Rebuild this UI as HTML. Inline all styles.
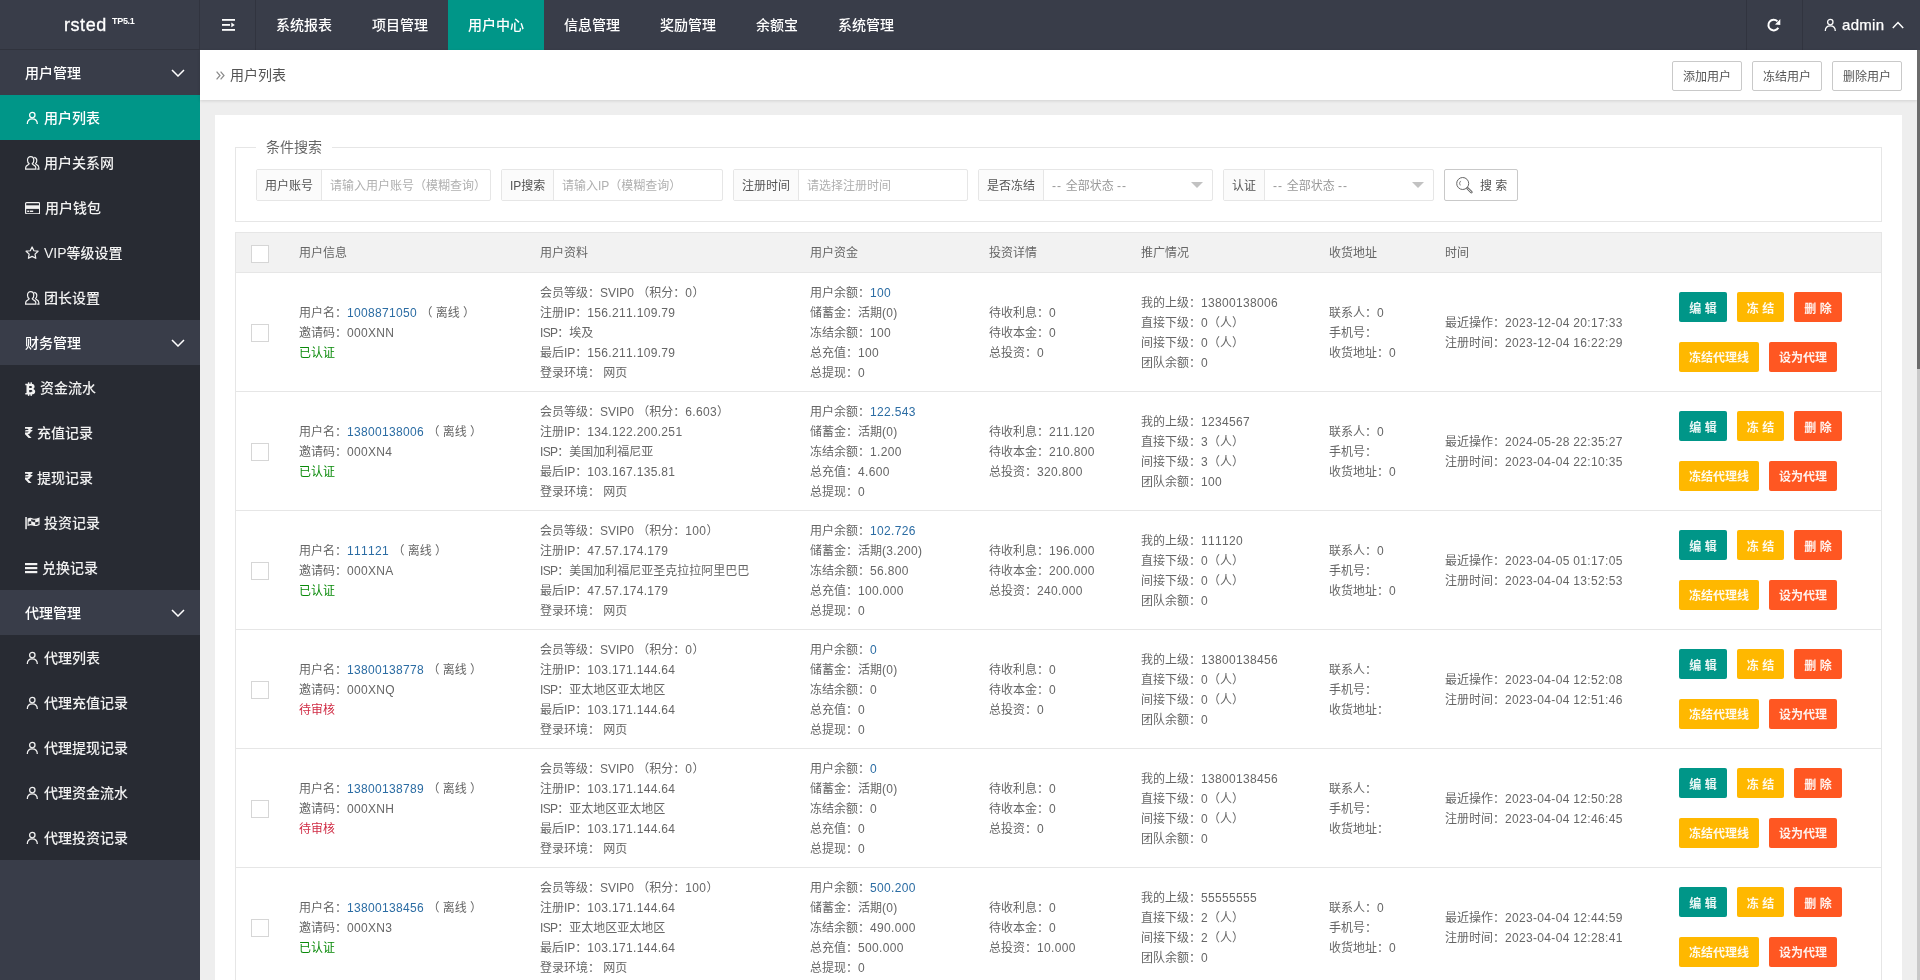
<!DOCTYPE html>
<html lang="zh-CN"><head><meta charset="utf-8"><title>用户列表</title>
<style>
*{box-sizing:border-box;margin:0;padding:0}
html,body{width:1920px;height:980px;overflow:hidden;background:#eee;font-family:"Liberation Sans","Noto Sans CJK SC",sans-serif;font-size:14px;color:#666}
i{font-style:normal;letter-spacing:.33px;font-kerning:none}
u{text-decoration:none;letter-spacing:-.7px}
i.d{letter-spacing:.9px;margin:0 .6px 0 0}
#root{position:absolute;left:0;top:0;width:1920px;height:980px;will-change:transform;transform:translateZ(0)}
#hd{position:absolute;left:0;top:0;width:1920px;height:50px;background:#393D49;color:#fff}
#logo{position:absolute;left:0;top:0;width:200px;height:50px;line-height:50px;}
#logo .a{position:absolute;left:64px;top:0;font-size:18px;letter-spacing:.55px;-webkit-text-stroke:.3px #fff}
#logo .b{position:absolute;left:112px;top:15px;font-size:9px;line-height:12px;font-weight:bold;letter-spacing:-.3px}
.vl{position:absolute;top:0;width:1px;height:50px;background:#31343f}
.nv{position:absolute;top:0;height:50px;line-height:50px;text-align:center;font-size:14px;color:#fff;font-weight:500}
.nv.act{background:#009688}
#side{position:absolute;left:0;top:50px;width:200px;height:930px;background:#393D49}
.sg{position:absolute;left:0;width:200px;height:45px;line-height:45px;color:#fff;font-weight:500;background:#393D49;margin-top:-50px}
.sg span{position:absolute;left:25px;top:1px}
.sg .chev{position:absolute;left:171px;top:19px}
.si{position:absolute;left:0;width:200px;height:45px;line-height:45px;color:#f2f2f2;font-weight:500;background:#282B33;margin-top:-50px}
.si.act{background:#009688;color:#fff}
.si span{position:absolute;top:1px;white-space:nowrap}
.ic{position:absolute}
#bc{position:absolute;left:200px;top:50px;width:1717px;height:50px;background:#fff;box-shadow:0 1px 3px rgba(0,0,0,.12)}
#bc .t{position:absolute;left:30px;top:0;line-height:50px;font-size:14px;color:#555}
.ob{position:absolute;top:11px;height:30px;width:70px;border:1px solid #c9c9c9;border-radius:2px;font-size:12px;line-height:30px;text-align:center;color:#555;background:#fff}
#card{position:absolute;left:215px;top:115px;width:1687px;height:900px;background:#fff}
#fs{position:absolute;left:20px;top:32px;width:1647px;height:75px;border:1px solid #e6e6e6}
#lg{position:absolute;left:41px;top:21px;padding:0 10px;background:#fff;font-size:14px;line-height:22px;color:#666}
.ig{position:absolute;top:54px;height:32px;border:1px solid #e6e6e6;border-radius:2px;font-size:12px;line-height:32px;display:flex}
.ig .l{background:#fbfbfb;border-right:1px solid #e6e6e6;color:#555;text-align:center;padding:0 8px;white-space:nowrap}
.ig .p{color:#b0b0b0;padding-left:8px;white-space:nowrap;flex:1;position:relative}
.ig .p.s{color:#999}
.ig .p.s::after{content:"";position:absolute;right:9px;top:12px;border:6px solid transparent;border-top-color:#c2c2c2}
#sb{position:absolute;left:1229px;top:54px;width:74px;height:32px;border:1px solid #c9c9c9;border-radius:2px;font-size:12px;line-height:32px;color:#555}
#tb{position:absolute;left:20px;top:117px;width:1647px;height:800px;border:1px solid #e6e6e6;border-bottom:0}
#th{position:absolute;left:0;top:0;width:1645px;height:40px;background:#f2f2f2;border-bottom:1px solid #e6e6e6;font-size:12px;line-height:41px;color:#666}
#th span{position:absolute;top:0}
.cb{position:absolute;left:15px;width:18px;height:18px;border:1px solid #d6d6d6;background:#fff}
.tr{position:absolute;left:0;width:1645px;height:119px;border-bottom:1px solid #e6e6e6;font-size:12px;line-height:20px;color:#666;margin-top:-1px}
.tr .cb{top:51px}
.c{position:absolute;top:1px;height:118px;display:flex;flex-direction:column;justify-content:center;white-space:nowrap}
.c a{color:#2b6ca3}
.c b{font-weight:normal}
.ok{color:#0a8a0a} .no{color:#d02c45}
.c1{left:63px}.c2{left:304px}.c3{left:574px}.c4{left:753px}.c5{left:905px}.c6{left:1093px}.c7{left:1209px}
.bt{position:absolute;height:30px;line-height:32px;border-radius:2px;color:rgba(255,255,255,.92);font-size:12px;font-weight:bold;text-align:center;white-space:nowrap}
.g{background:#009688}.y{background:#FFB800}.r{background:#FF5722}
#sbar{position:absolute;left:1917px;top:50px;width:3px;height:930px;background:#c9c9c9}
#sbar div{width:3px;height:319px;background:#6b6b6b}
</style></head><body><div id="root">
<div id="hd">
<div style="position:absolute;left:0;top:49px;width:200px;height:1px;background:#30333d"></div><div id="logo"><span class="a">rsted</span><span class="b">TP5.1</span></div>
<div class="vl" style="left:199px"></div><div class="vl" style="left:255px"></div><div class="vl" style="left:1746px"></div><div class="vl" style="left:1802px"></div>
<svg style="position:absolute;left:222px;top:19px" width="13" height="12" viewBox="0 0 13 12"><rect x="0" y="0" width="13" height="1.8" fill="#fff"/><rect x="0" y="5" width="8" height="1.8" fill="#fff"/><rect x="0" y="10" width="13" height="1.8" fill="#fff"/><path d="M9.3 3.6 L12.8 5.9 L9.3 8.2 Z" fill="#fff"/></svg>
<div class="nv" style="left:256px;width:96px">系统报表</div>
<div class="nv" style="left:352px;width:96px">项目管理</div>
<div class="nv act" style="left:448px;width:96px">用户中心</div>
<div class="nv" style="left:544px;width:96px">信息管理</div>
<div class="nv" style="left:640px;width:96px">奖励管理</div>
<div class="nv" style="left:736px;width:82px">余额宝</div>
<div class="nv" style="left:818px;width:96px">系统管理</div>
<svg style="position:absolute;left:1766px;top:18px" width="16" height="15" viewBox="0 0 16 15"><path d="M11.45 3.35 A5.3 5.3 0 1 0 12.29 9.75" fill="none" stroke="#fff" stroke-width="2"/><path d="M14.3 1.1 L14.3 7 L9 6.6 Z" fill="#fff"/></svg>
<svg class="ic" color="#fff" style="left:1824px;top:18px" width="13" height="14" viewBox="0 0 13 14"><circle cx="6.3" cy="4.1" r="2.7" fill="none" stroke="currentColor" stroke-width="1.25"/><path d="M1.3 13.1 C1.3 9.6 3.5 7.9 6.3 7.9 C9.1 7.9 11.3 9.6 11.3 13.1" fill="none" stroke="currentColor" stroke-width="1.25"/></svg>
<div class="nv" style="left:1842px;width:44px;font-size:15px;text-align:left;letter-spacing:.3px;-webkit-text-stroke:.25px #fff">admin</div>
<svg style="position:absolute;left:1892px;top:21px" width="12" height="8" viewBox="0 0 12 8"><path d="M0.8 7 L6 1.6 L11.2 7" fill="none" stroke="#fff" stroke-width="1.5"/></svg>
</div>
<div id="side">
<div class="sg" style="top:50px"><span>用户管理</span><svg class="chev" width="14" height="8" viewBox="0 0 14 8"><path d="M1 1 L7 7 L13 1" fill="none" stroke="#fff" stroke-width="1.5"/></svg></div>
<div class="si act" style="top:95px"><svg class="ic" style="left:26px;top:16px" width="13" height="14" viewBox="0 0 13 14"><circle cx="6.3" cy="4.1" r="2.7" fill="none" stroke="currentColor" stroke-width="1.25"/><path d="M1.3 13.1 C1.3 9.6 3.5 7.9 6.3 7.9 C9.1 7.9 11.3 9.6 11.3 13.1" fill="none" stroke="currentColor" stroke-width="1.25"/></svg><span style="left:44px">用户列表</span></div>
<div class="si" style="top:140px"><svg class="ic" style="left:25px;top:16px" width="15" height="14" viewBox="0 0 15 14"><path d="M5.6 0.7 C7.6 0.7 8.8 2.2 8.8 4.2 C8.8 5.8 8.1 7 7.2 7.7 C7.2 8.6 9.6 9.2 10.4 10.4 C10.9 11.2 10.9 12.4 10.9 13.2 L0.6 13.2 C0.6 12.2 0.6 11.2 1.1 10.4 C1.9 9.2 4.2 8.6 4.2 7.7 C3.2 7 2.5 5.8 2.5 4.2 C2.5 2.2 3.7 0.7 5.6 0.7 Z" fill="none" stroke="currentColor" stroke-width="1.2"/><path d="M9.2 1.4 C10.9 1.6 11.8 3 11.8 4.6 C11.8 6 11.2 7 10.5 7.6 C10.5 8.5 12.6 9 13.4 10.2 C13.9 11 13.9 12 13.9 13.2 L12.2 13.2" fill="none" stroke="currentColor" stroke-width="1.2"/></svg><span style="left:44px">用户关系网</span></div>
<div class="si" style="top:185px"><svg class="ic" style="left:24.9px;top:16.8px" width="15.2" height="12.4" viewBox="0 0 15.2 12.4"><rect x="0.6" y="0.6" width="14" height="11.2" rx="1" fill="none" stroke="currentColor" stroke-width="1.2"/><rect x="0.6" y="3.3" width="14" height="3.6" fill="currentColor"/><rect x="2.2" y="8.6" width="2" height="1.4" fill="currentColor"/><rect x="4.9" y="8.6" width="3.3" height="1.4" fill="currentColor"/></svg><span style="left:45px">用户钱包</span></div>
<div class="si" style="top:230px"><svg class="ic" style="left:24.6px;top:15.6px" width="14.2" height="13.3" viewBox="0 0 15 14"><path d="M7.5 1 L9.4 5 L13.8 5.5 L10.6 8.6 L11.4 13 L7.5 10.9 L3.6 13 L4.4 8.6 L1.2 5.5 L5.6 5 Z" fill="none" stroke="currentColor" stroke-width="1.3" stroke-linejoin="round"/></svg><span style="left:44px">VIP等级设置</span></div>
<div class="si" style="top:275px"><svg class="ic" style="left:25px;top:16px" width="15" height="14" viewBox="0 0 15 14"><path d="M5.6 0.7 C7.6 0.7 8.8 2.2 8.8 4.2 C8.8 5.8 8.1 7 7.2 7.7 C7.2 8.6 9.6 9.2 10.4 10.4 C10.9 11.2 10.9 12.4 10.9 13.2 L0.6 13.2 C0.6 12.2 0.6 11.2 1.1 10.4 C1.9 9.2 4.2 8.6 4.2 7.7 C3.2 7 2.5 5.8 2.5 4.2 C2.5 2.2 3.7 0.7 5.6 0.7 Z" fill="none" stroke="currentColor" stroke-width="1.2"/><path d="M9.2 1.4 C10.9 1.6 11.8 3 11.8 4.6 C11.8 6 11.2 7 10.5 7.6 C10.5 8.5 12.6 9 13.4 10.2 C13.9 11 13.9 12 13.9 13.2 L12.2 13.2" fill="none" stroke="currentColor" stroke-width="1.2"/></svg><span style="left:44px">团长设置</span></div>
<div class="sg" style="top:320px"><span>财务管理</span><svg class="chev" width="14" height="8" viewBox="0 0 14 8"><path d="M1 1 L7 7 L13 1" fill="none" stroke="#fff" stroke-width="1.5"/></svg></div>
<div class="si" style="top:365px"><svg class="ic" style="left:25px;top:16.6px" width="11" height="14" viewBox="0 0 11 14"><path d="M0.3 1.8 H6.2 C8.6 1.8 9.6 3 9.6 4.6 C9.6 5.7 9.1 6.5 8.2 6.9 C9.5 7.3 10.2 8.2 10.2 9.5 C10.2 11.4 8.9 12.4 6.5 12.4 H0.3 V10.9 H1.5 V3.3 H0.3 Z M4.2 3.9 V6 H5.6 C6.5 6 6.9 5.6 6.9 4.95 C6.9 4.3 6.5 3.9 5.6 3.9 Z M4.2 7.9 V10.3 H5.8 C6.9 10.3 7.4 9.9 7.4 9.1 C7.4 8.3 6.9 7.9 5.8 7.9 Z" fill="currentColor" fill-rule="evenodd"/><rect x="2.9" y="0.3" width="1.4" height="2" fill="currentColor"/><rect x="5.5" y="0.3" width="1.4" height="2" fill="currentColor"/><rect x="2.9" y="12" width="1.4" height="1.9" fill="currentColor"/><rect x="5.5" y="12" width="1.4" height="1.9" fill="currentColor"/></svg><span style="left:40px">资金流水</span></div>
<div class="si" style="top:410px"><svg class="ic" style="left:25px;top:17px" width="8" height="11" viewBox="0 0 8 11"><path d="M0 0 H7.6 L7 1.8 H5.3 C5.6 2.1 5.8 2.5 5.9 2.9 H7.6 L7 4.6 H5.9 C5.6 6.3 4.4 7.1 2.9 7.3 L6.6 10.9 H3.7 L0 7.2 V5.6 H1.6 C2.7 5.6 3.4 5.3 3.7 4.6 H0 L0.6 2.9 H3.6 C3.3 2.2 2.6 1.8 1.5 1.8 H0 Z" fill="currentColor"/></svg><span style="left:37px">充值记录</span></div>
<div class="si" style="top:455px"><svg class="ic" style="left:25px;top:17px" width="8" height="11" viewBox="0 0 8 11"><path d="M0 0 H7.6 L7 1.8 H5.3 C5.6 2.1 5.8 2.5 5.9 2.9 H7.6 L7 4.6 H5.9 C5.6 6.3 4.4 7.1 2.9 7.3 L6.6 10.9 H3.7 L0 7.2 V5.6 H1.6 C2.7 5.6 3.4 5.3 3.7 4.6 H0 L0.6 2.9 H3.6 C3.3 2.2 2.6 1.8 1.5 1.8 H0 Z" fill="currentColor"/></svg><span style="left:37px">提现记录</span></div>
<div class="si" style="top:500px"><svg class="ic" style="left:25px;top:16.8px" width="15" height="13" viewBox="0 0 15 13"><rect x="0.3" y="0" width="1.5" height="12.2" fill="currentColor"/><path d="M3.1 1.9 C4.8 1.1 6.2 1.3 7.6 1.9 C9.4 2.7 11.4 2.4 14 1.2 V7.4 C11.6 8.6 9.6 8.9 7.8 8.1 C6.4 7.5 4.8 7.4 3.1 8.2 Z" fill="none" stroke="currentColor" stroke-width="1.1"/><path d="M3.1 1.9 C4.2 1.4 5.2 1.3 6.2 1.5 V4.3 C5.2 4.1 4.2 4.3 3.1 4.8 Z M6.2 4.3 C7.4 4.6 8.6 5.4 10.2 5.3 V8.3 C8.6 8.4 7.4 7.7 6.2 7.4 Z M10.2 2.6 C11.6 2.5 12.8 2 14 1.2 V4.2 C12.8 4.9 11.6 5.3 10.2 5.3 Z" fill="currentColor"/></svg><span style="left:44px">投资记录</span></div>
<div class="si" style="top:545px"><svg class="ic" style="left:25px;top:18px" width="13" height="11" viewBox="0 0 13 11"><rect x="0" y="0" width="12.3" height="2.2" fill="currentColor"/><rect x="0" y="4" width="12.3" height="2.2" fill="currentColor"/><rect x="0" y="8" width="12.3" height="2.2" fill="currentColor"/></svg><span style="left:42px">兑换记录</span></div>
<div class="sg" style="top:590px"><span>代理管理</span><svg class="chev" width="14" height="8" viewBox="0 0 14 8"><path d="M1 1 L7 7 L13 1" fill="none" stroke="#fff" stroke-width="1.5"/></svg></div>
<div class="si" style="top:635px"><svg class="ic" style="left:26px;top:16px" width="13" height="14" viewBox="0 0 13 14"><circle cx="6.3" cy="4.1" r="2.7" fill="none" stroke="currentColor" stroke-width="1.25"/><path d="M1.3 13.1 C1.3 9.6 3.5 7.9 6.3 7.9 C9.1 7.9 11.3 9.6 11.3 13.1" fill="none" stroke="currentColor" stroke-width="1.25"/></svg><span style="left:44px">代理列表</span></div>
<div class="si" style="top:680px"><svg class="ic" style="left:26px;top:16px" width="13" height="14" viewBox="0 0 13 14"><circle cx="6.3" cy="4.1" r="2.7" fill="none" stroke="currentColor" stroke-width="1.25"/><path d="M1.3 13.1 C1.3 9.6 3.5 7.9 6.3 7.9 C9.1 7.9 11.3 9.6 11.3 13.1" fill="none" stroke="currentColor" stroke-width="1.25"/></svg><span style="left:44px">代理充值记录</span></div>
<div class="si" style="top:725px"><svg class="ic" style="left:26px;top:16px" width="13" height="14" viewBox="0 0 13 14"><circle cx="6.3" cy="4.1" r="2.7" fill="none" stroke="currentColor" stroke-width="1.25"/><path d="M1.3 13.1 C1.3 9.6 3.5 7.9 6.3 7.9 C9.1 7.9 11.3 9.6 11.3 13.1" fill="none" stroke="currentColor" stroke-width="1.25"/></svg><span style="left:44px">代理提现记录</span></div>
<div class="si" style="top:770px"><svg class="ic" style="left:26px;top:16px" width="13" height="14" viewBox="0 0 13 14"><circle cx="6.3" cy="4.1" r="2.7" fill="none" stroke="currentColor" stroke-width="1.25"/><path d="M1.3 13.1 C1.3 9.6 3.5 7.9 6.3 7.9 C9.1 7.9 11.3 9.6 11.3 13.1" fill="none" stroke="currentColor" stroke-width="1.25"/></svg><span style="left:44px">代理资金流水</span></div>
<div class="si" style="top:815px"><svg class="ic" style="left:26px;top:16px" width="13" height="14" viewBox="0 0 13 14"><circle cx="6.3" cy="4.1" r="2.7" fill="none" stroke="currentColor" stroke-width="1.25"/><path d="M1.3 13.1 C1.3 9.6 3.5 7.9 6.3 7.9 C9.1 7.9 11.3 9.6 11.3 13.1" fill="none" stroke="currentColor" stroke-width="1.25"/></svg><span style="left:44px">代理投资记录</span></div>
</div>
<div id="bc"><svg style="position:absolute;left:16px;top:21px" width="9" height="9" viewBox="0 0 9 9"><path d="M0.6 0.6 L4 4.5 L0.6 8.4 M4.6 0.6 L8 4.5 L4.6 8.4" fill="none" stroke="#8a8a8a" stroke-width="1.2"/></svg><span class="t">用户列表</span>
<span class="ob" style="left:1472px">添加用户</span><span class="ob" style="left:1552px">冻结用户</span><span class="ob" style="left:1632px">删除用户</span></div>
<div id="card">
<div id="fs"></div><div id="lg">条件搜索</div>
<div class="ig" style="left:41px;width:235px"><span class="l" style="width:65px">用户账号</span><span class="p">请输入用户账号（模糊查询）</span></div>
<div class="ig" style="left:286px;width:222px"><span class="l" style="width:52px">IP搜索</span><span class="p">请输入IP（模糊查询）</span></div>
<div class="ig" style="left:518px;width:235px"><span class="l" style="width:65px">注册时间</span><span class="p">请选择注册时间</span></div>
<div class="ig" style="left:763px;width:235px"><span class="l" style="width:65px">是否冻结</span><span class="p s"><i class="d">--</i> 全部状态 <i class="d">--</i></span></div>
<div class="ig" style="left:1008px;width:211px"><span class="l" style="width:41px">认证</span><span class="p s"><i class="d">--</i> 全部状态 <i class="d">--</i></span></div>
<div id="sb"><svg style="position:absolute;left:11px;top:7px" width="18" height="18" viewBox="0 0 18 18"><circle cx="6.7" cy="6.5" r="6" fill="none" stroke="#666" stroke-width="1"/><path d="M11.6 11.4 L15.4 15.2" stroke="#666" stroke-width="2.6" stroke-linecap="round"/><path d="M11.9 11.7 L15.3 15.1" stroke="#fff" stroke-width="0.9" stroke-linecap="round"/><path d="M4.7 3.9 A3.4 3.4 0 0 0 4.3 8.4" fill="none" stroke="#666" stroke-width="0.8"/></svg><span style="position:absolute;left:35px">搜 索</span></div>
<div id="tb">
<div id="th"><span class="cb" style="top:12px"></span><span style="left:63px">用户信息</span><span style="left:304px">用户资料</span><span style="left:574px">用户资金</span><span style="left:753px">投资详情</span><span style="left:905px">推广情况</span><span style="left:1093px">收货地址</span><span style="left:1209px">时间</span></div>
<div class="tr" style="top:41px">
<span class="cb"></span>
<div class="c c1"><p>用户名：<a><i>1008871050</i></a> （ 离线 ）</p><p>邀请码：<i>000XNN</i></p><p><b class="ok">已认证</b></p></div>
<div class="c c2"><p>会员等级：SVIP0 （积分：<i>0</i>）</p><p>注册IP：<i>156.211.109.79</i></p><p><u>ISP</u>：埃及</p><p>最后IP：<i>156.211.109.79</i></p><p>登录环境： 网页</p></div>
<div class="c c3"><p>用户余额：<a><i>100</i></a></p><p>储蓄金：活期<i>(0)</i></p><p>冻结余额：<i>100</i></p><p>总充值：<i>100</i></p><p>总提现：<i>0</i></p></div>
<div class="c c4"><p>待收利息：<i>0</i></p><p>待收本金：<i>0</i></p><p>总投资：<i>0</i></p></div>
<div class="c c5"><p>我的上级：<i>13800138006</i></p><p>直接下级：<i>0</i>（人）</p><p>间接下级：<i>0</i>（人）</p><p>团队余额：<i>0</i></p></div>
<div class="c c6"><p>联系人：<i>0</i></p><p>手机号：</p><p>收货地址：<i>0</i></p></div>
<div class="c c7"><p>最近操作：<i>2023-12-04 20:17:33</i></p><p>注册时间：<i>2023-12-04 16:22:29</i></p></div>
<span class="bt g" style="left:1443px;top:19px;width:48px;line-height:34px">编 辑</span><span class="bt y" style="left:1501px;top:19px;width:47px;line-height:34px">冻 结</span><span class="bt r" style="left:1558px;top:19px;width:48px;line-height:34px">删 除</span>
<span class="bt y" style="left:1443px;top:69px;width:80px">冻结代理线</span><span class="bt r" style="left:1533px;top:69px;width:68px">设为代理</span>
</div>
<div class="tr" style="top:160px">
<span class="cb"></span>
<div class="c c1"><p>用户名：<a><i>13800138006</i></a> （ 离线 ）</p><p>邀请码：<i>000XN4</i></p><p><b class="ok">已认证</b></p></div>
<div class="c c2"><p>会员等级：SVIP0 （积分：<i>6.603</i>）</p><p>注册IP：<i>134.122.200.251</i></p><p><u>ISP</u>：美国加利福尼亚</p><p>最后IP：<i>103.167.135.81</i></p><p>登录环境： 网页</p></div>
<div class="c c3"><p>用户余额：<a><i>122.543</i></a></p><p>储蓄金：活期<i>(0)</i></p><p>冻结余额：<i>1.200</i></p><p>总充值：<i>4.600</i></p><p>总提现：<i>0</i></p></div>
<div class="c c4"><p>待收利息：<i>211.120</i></p><p>待收本金：<i>210.800</i></p><p>总投资：<i>320.800</i></p></div>
<div class="c c5"><p>我的上级：<i>1234567</i></p><p>直接下级：<i>3</i>（人）</p><p>间接下级：<i>3</i>（人）</p><p>团队余额：<i>100</i></p></div>
<div class="c c6"><p>联系人：<i>0</i></p><p>手机号：</p><p>收货地址：<i>0</i></p></div>
<div class="c c7"><p>最近操作：<i>2024-05-28 22:35:27</i></p><p>注册时间：<i>2023-04-04 22:10:35</i></p></div>
<span class="bt g" style="left:1443px;top:19px;width:48px;line-height:34px">编 辑</span><span class="bt y" style="left:1501px;top:19px;width:47px;line-height:34px">冻 结</span><span class="bt r" style="left:1558px;top:19px;width:48px;line-height:34px">删 除</span>
<span class="bt y" style="left:1443px;top:69px;width:80px">冻结代理线</span><span class="bt r" style="left:1533px;top:69px;width:68px">设为代理</span>
</div>
<div class="tr" style="top:279px">
<span class="cb"></span>
<div class="c c1"><p>用户名：<a><i>111121</i></a> （ 离线 ）</p><p>邀请码：<i>000XNA</i></p><p><b class="ok">已认证</b></p></div>
<div class="c c2"><p>会员等级：SVIP0 （积分：<i>100</i>）</p><p>注册IP：<i>47.57.174.179</i></p><p><u>ISP</u>：美国加利福尼亚圣克拉拉阿里巴巴</p><p>最后IP：<i>47.57.174.179</i></p><p>登录环境： 网页</p></div>
<div class="c c3"><p>用户余额：<a><i>102.726</i></a></p><p>储蓄金：活期<i>(3.200)</i></p><p>冻结余额：<i>56.800</i></p><p>总充值：<i>100.000</i></p><p>总提现：<i>0</i></p></div>
<div class="c c4"><p>待收利息：<i>196.000</i></p><p>待收本金：<i>200.000</i></p><p>总投资：<i>240.000</i></p></div>
<div class="c c5"><p>我的上级：<i>111120</i></p><p>直接下级：<i>0</i>（人）</p><p>间接下级：<i>0</i>（人）</p><p>团队余额：<i>0</i></p></div>
<div class="c c6"><p>联系人：<i>0</i></p><p>手机号：</p><p>收货地址：<i>0</i></p></div>
<div class="c c7"><p>最近操作：<i>2023-04-05 01:17:05</i></p><p>注册时间：<i>2023-04-04 13:52:53</i></p></div>
<span class="bt g" style="left:1443px;top:19px;width:48px;line-height:34px">编 辑</span><span class="bt y" style="left:1501px;top:19px;width:47px;line-height:34px">冻 结</span><span class="bt r" style="left:1558px;top:19px;width:48px;line-height:34px">删 除</span>
<span class="bt y" style="left:1443px;top:69px;width:80px">冻结代理线</span><span class="bt r" style="left:1533px;top:69px;width:68px">设为代理</span>
</div>
<div class="tr" style="top:398px">
<span class="cb"></span>
<div class="c c1"><p>用户名：<a><i>13800138778</i></a> （ 离线 ）</p><p>邀请码：<i>000XNQ</i></p><p><b class="no">待审核</b></p></div>
<div class="c c2"><p>会员等级：SVIP0 （积分：<i>0</i>）</p><p>注册IP：<i>103.171.144.64</i></p><p><u>ISP</u>：亚太地区亚太地区</p><p>最后IP：<i>103.171.144.64</i></p><p>登录环境： 网页</p></div>
<div class="c c3"><p>用户余额：<a><i>0</i></a></p><p>储蓄金：活期<i>(0)</i></p><p>冻结余额：<i>0</i></p><p>总充值：<i>0</i></p><p>总提现：<i>0</i></p></div>
<div class="c c4"><p>待收利息：<i>0</i></p><p>待收本金：<i>0</i></p><p>总投资：<i>0</i></p></div>
<div class="c c5"><p>我的上级：<i>13800138456</i></p><p>直接下级：<i>0</i>（人）</p><p>间接下级：<i>0</i>（人）</p><p>团队余额：<i>0</i></p></div>
<div class="c c6"><p>联系人：</p><p>手机号：</p><p>收货地址：</p></div>
<div class="c c7"><p>最近操作：<i>2023-04-04 12:52:08</i></p><p>注册时间：<i>2023-04-04 12:51:46</i></p></div>
<span class="bt g" style="left:1443px;top:19px;width:48px;line-height:34px">编 辑</span><span class="bt y" style="left:1501px;top:19px;width:47px;line-height:34px">冻 结</span><span class="bt r" style="left:1558px;top:19px;width:48px;line-height:34px">删 除</span>
<span class="bt y" style="left:1443px;top:69px;width:80px">冻结代理线</span><span class="bt r" style="left:1533px;top:69px;width:68px">设为代理</span>
</div>
<div class="tr" style="top:517px">
<span class="cb"></span>
<div class="c c1"><p>用户名：<a><i>13800138789</i></a> （ 离线 ）</p><p>邀请码：<i>000XNH</i></p><p><b class="no">待审核</b></p></div>
<div class="c c2"><p>会员等级：SVIP0 （积分：<i>0</i>）</p><p>注册IP：<i>103.171.144.64</i></p><p><u>ISP</u>：亚太地区亚太地区</p><p>最后IP：<i>103.171.144.64</i></p><p>登录环境： 网页</p></div>
<div class="c c3"><p>用户余额：<a><i>0</i></a></p><p>储蓄金：活期<i>(0)</i></p><p>冻结余额：<i>0</i></p><p>总充值：<i>0</i></p><p>总提现：<i>0</i></p></div>
<div class="c c4"><p>待收利息：<i>0</i></p><p>待收本金：<i>0</i></p><p>总投资：<i>0</i></p></div>
<div class="c c5"><p>我的上级：<i>13800138456</i></p><p>直接下级：<i>0</i>（人）</p><p>间接下级：<i>0</i>（人）</p><p>团队余额：<i>0</i></p></div>
<div class="c c6"><p>联系人：</p><p>手机号：</p><p>收货地址：</p></div>
<div class="c c7"><p>最近操作：<i>2023-04-04 12:50:28</i></p><p>注册时间：<i>2023-04-04 12:46:45</i></p></div>
<span class="bt g" style="left:1443px;top:19px;width:48px;line-height:34px">编 辑</span><span class="bt y" style="left:1501px;top:19px;width:47px;line-height:34px">冻 结</span><span class="bt r" style="left:1558px;top:19px;width:48px;line-height:34px">删 除</span>
<span class="bt y" style="left:1443px;top:69px;width:80px">冻结代理线</span><span class="bt r" style="left:1533px;top:69px;width:68px">设为代理</span>
</div>
<div class="tr" style="top:636px">
<span class="cb"></span>
<div class="c c1"><p>用户名：<a><i>13800138456</i></a> （ 离线 ）</p><p>邀请码：<i>000XN3</i></p><p><b class="ok">已认证</b></p></div>
<div class="c c2"><p>会员等级：SVIP0 （积分：<i>100</i>）</p><p>注册IP：<i>103.171.144.64</i></p><p><u>ISP</u>：亚太地区亚太地区</p><p>最后IP：<i>103.171.144.64</i></p><p>登录环境： 网页</p></div>
<div class="c c3"><p>用户余额：<a><i>500.200</i></a></p><p>储蓄金：活期<i>(0)</i></p><p>冻结余额：<i>490.000</i></p><p>总充值：<i>500.000</i></p><p>总提现：<i>0</i></p></div>
<div class="c c4"><p>待收利息：<i>0</i></p><p>待收本金：<i>0</i></p><p>总投资：<i>10.000</i></p></div>
<div class="c c5"><p>我的上级：<i>55555555</i></p><p>直接下级：<i>2</i>（人）</p><p>间接下级：<i>2</i>（人）</p><p>团队余额：<i>0</i></p></div>
<div class="c c6"><p>联系人：<i>0</i></p><p>手机号：</p><p>收货地址：<i>0</i></p></div>
<div class="c c7"><p>最近操作：<i>2023-04-04 12:44:59</i></p><p>注册时间：<i>2023-04-04 12:28:41</i></p></div>
<span class="bt g" style="left:1443px;top:19px;width:48px;line-height:34px">编 辑</span><span class="bt y" style="left:1501px;top:19px;width:47px;line-height:34px">冻 结</span><span class="bt r" style="left:1558px;top:19px;width:48px;line-height:34px">删 除</span>
<span class="bt y" style="left:1443px;top:69px;width:80px">冻结代理线</span><span class="bt r" style="left:1533px;top:69px;width:68px">设为代理</span>
</div>
</div>
</div>
<div id="sbar"><div></div></div>
</div></body></html>
